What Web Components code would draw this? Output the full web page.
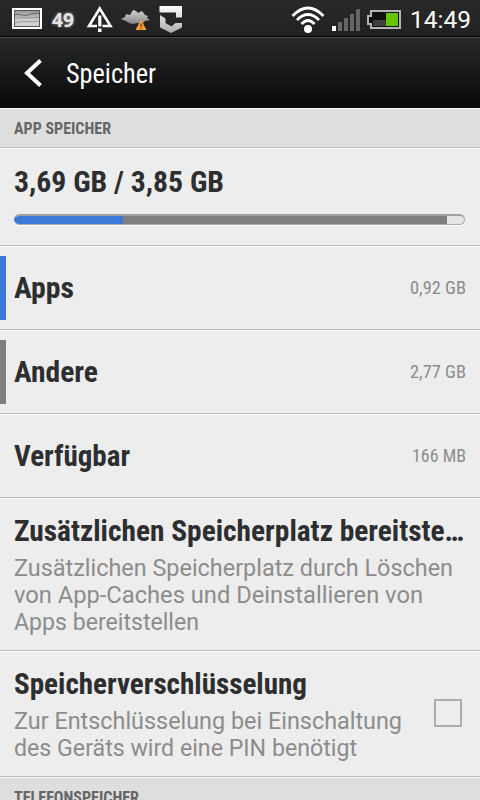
<!doctype html>
<html lang="de">
<head>
  <meta charset="utf-8">
  <title>Speicher</title>

  <style>
    html, body {
      margin: 0;
      width: 480px;
      height: 800px;
      overflow: hidden;
      background: #ededed;
      font-family: "Roboto Condensed", Roboto, sans-serif;
      color: #2d2e2f;
    }
  </style>

  <template id="fit-text-content">
    <style>
      :host { display: block; flex: none; white-space: nowrap; }
      span { display: inline-block; transform-origin: 0 50%; vertical-align: top; }
    </style>
    <span><slot></slot></span>
  </template>

  <template id="status-bar-content">
    <style>
      :host {
        display: flex;
        box-sizing: border-box;
        height: 38px;
        background: linear-gradient(#292929, #202122);
        border-bottom: 1px solid #4a4a4a;
        box-shadow: inset 0 -1px #050505;
        color: #fff;
        font-family: Roboto, sans-serif;
      }
      svg { display: block; flex: none; }
      .badge {
        margin-left: 10px;
        font: bold 20px/39px "Open Sans", sans-serif;
        color: #e4e4e4;
        text-shadow: 0 0 3px #aaa;
      }
      .clock { margin-left: 9px; font-size: 24px; line-height: 40px; }
    </style>
    <svg width="42" height="37" viewBox="0 0 42 37">
      <defs>
        <linearGradient id="photo" x2="0" y2="1"><stop stop-color="#8b8b8b"/><stop offset=".6" stop-color="#d0d0d0"/></linearGradient>
      </defs>
      <rect x="13" y="9" width="28" height="19" fill="url(#photo)" stroke="#fff" stroke-width="2"/>
      <rect x="14.500" y="10.500" width="25" height="16" fill="none" stroke="#555"/>
      <path d="M15 15c6-2 8 2 13 0s7-1 11-2" fill="none" stroke="#666"/>
      <path d="M15 18c7-1 10 1 24-1M15 23c8-3 14 0 24-2" fill="none" stroke="#999"/>
    </svg>
    <fit-text class="badge" width="22">49</fit-text>
    <svg width="115" height="37" viewBox="74 0 115 37">
      <defs>
        <linearGradient id="cloud" x2="0" y2="1"><stop stop-color="#d5d5d5"/><stop offset="1" stop-color="#858585"/></linearGradient>
        <linearGradient id="shield" x2="0" y2="1"><stop stop-color="#fff"/><stop offset="1" stop-color="#aaa"/></linearGradient>
      </defs>
      <path d="M97 26h-8L99.700 8.500 110.500 26h-8" fill="none" stroke="#fff" stroke-width="2.600"/>
      <path d="M98.200 15.500h3.200v11h-3.200zM98 28.500h3.500v3.500h-3.500z" fill="#fff"/>
      <path d="M121 19l4-2 1-3 4 1 3-5 3 1 2 2 4-2 3 4 3 1-1 2 3 2-5 1-3 3-5-1-4 1-4-1-3-2z" fill="url(#cloud)"/>
      <path d="M141 19.500l5.500 10.500h-11z" fill="#f99c32"/>
      <path d="M141 23.500v3.500M141 28v1" stroke="#6b4522" stroke-width="1.400"/>
      <path d="M159.500 6h22.500v11.500h-6v-5h-16.500zM160 15l5.500 3.500v4.500l6 3.500 4-3.500h6.500v4.500l-11 5.500-11-5.500z" fill="url(#shield)"/>
    </svg>
    <svg width="110" height="37" viewBox="291 0 110 37" style="margin-left:102px">
      <g fill="none" stroke="#fff" stroke-width="2.800">
        <path d="M292.500 16q15.500-16 31 0"/>
        <path d="M297 20q11-11 22 0"/>
        <path d="M301.500 24q6.500-7 13 0"/>
      </g>
      <circle cx="308" cy="29" r="4" fill="#fff"/>
      <path d="M332 26h4v5h-4z" fill="#fff"/>
      <path d="M338 22h4v9h-4zM344 18h4v13h-4zM350 14h4v17h-4zM356 9h4v22h-4z" fill="#666"/>
      <path d="M371 11h29v17h-29v-4h-3v-8h3z" fill="#111" stroke="#b5b5b5" stroke-width="2"/>
      <path d="M373 20h13v6h-13z" fill="#404040"/>
      <path d="M386 13h12v13h-12z" fill="#66c400"/>
    </svg>
    <fit-text class="clock" width="61">14:49</fit-text>
  </template>

  <template id="title-bar-content">
    <style>
      :host {
        display: flex;
        align-items: center;
        height: 70px;
        background: linear-gradient(#28292a, #080808);
        color: #fff;
        font-size: 27px;
      }
      svg { display: block; margin: 0 22px; }
      ::slotted(*) { padding-top: 2px; }
    </style>
    <svg width="22" height="30" viewBox="0 0 22 30"><path d="M18.500 2.500L5 15l13.500 12.500" fill="none" stroke="#fff" stroke-width="4"/></svg>
    <slot></slot>
  </template>

  <template id="section-head-content">
    <style>
      :host {
        display: flex;
        box-sizing: border-box;
        height: 40px;
        padding-left: 14px;
        border-top: 1px solid #f5f5f5;
        border-bottom: 1px solid #bcbcbc;
        background: #dedede;
        color: #666;
        font-size: 16px;
        font-weight: bold;
        line-height: 39px;
      }
    </style>
    <slot></slot>
  </template>

  <template id="list-row-content">
    <style>
      :host {
        display: flex;
        align-items: center;
        box-sizing: border-box;
        height: 84px;
        border-top: 1px solid #fff;
        border-bottom: 1px solid #bbb;
      }
      .chip { width: 6px; height: 64px; margin-right: 8px; background: var(--chip, transparent); }
      .main { flex: 1; font-size: 30px; font-weight: bold; line-height: 36px; }
      .end { padding: 0 14px 2px 0; color: #8c8c8c; font-size: 18px; }
      ::slotted([slot=note]) {
        position: relative;
        font: 23px/27px Roboto, sans-serif;
        color: #8c8c8c;
      }
      .notes { display: block; }
      :host(.noted) .notes { padding-top: 6px; }
    </style>
    <div class="chip"></div>
    <div class="main"><slot></slot><div class="notes"><slot name="note"></slot></div></div>
    <div class="end"><slot name="end"></slot></div>
  </template>

  <template id="usage-bar-content">
    <style>
      :host {
        display: flex;
        box-sizing: border-box;
        width: 451px;
        height: 11px;
        margin-top: 14px;
        border: 1px solid #aaa;
        border-top: 2px solid #a0a0a0;
        border-left: 0;
        border-radius: 6px;
        overflow: hidden;
        background: #e6e6e6;
        box-shadow: 0 1px #fff;
      }
      .apps { width: 109px; background: #3c79d8; }
      .other { width: 324px; background: #7f7f7d; }
    </style>
    <div class="apps"></div><div class="other"></div>
  </template>

  <template id="check-box-content">
    <style>
      :host {
        display: block;
        box-sizing: border-box;
        width: 28px;
        height: 28px;
        margin-right: 4px;
        border: 2px solid #adadad;
      }
    </style>
  </template>

  <script>

    function define(name, ready) {
      customElements.define(name, class extends HTMLElement {
        connectedCallback() {
          const root = this.attachShadow({mode: 'open'});
          const template = document.getElementById(name + '-content');
          root.appendChild(document.importNode(template.content, true));
          if (ready) {
            ready(this);
          }
        }
      });
    }

    // One line of text, squeezed or stretched to the given width.
    function fitText(el) {
      const span = el.shadowRoot.querySelector('span');
      const width = Number(el.getAttribute('width'));
      el.style.width = width + 'px';
      requestAnimationFrame(() => {
        const natural = span.getBoundingClientRect().width;
        span.style.transform = `scaleX(${width / natural})`;
      });
    }

    window.addEventListener('DOMContentLoaded', () => {
      define('status-bar');
      define('title-bar');
      define('section-head');
      define('list-row');
      define('usage-bar');
      define('check-box');
      define('fit-text', fitText);
    });

  </script>

</head>
<body>
  <status-bar></status-bar>
  <title-bar><fit-text width="90">Speicher</fit-text></title-bar>
  <section-head><fit-text width="97">APP SPEICHER</fit-text></section-head>
  <list-row style="height:98px;padding-bottom:6px">
    <fit-text width="210">3,69 GB / 3,85 GB</fit-text>
    <usage-bar></usage-bar>
  </list-row>
  <list-row style="--chip:#3c79d8">
    <fit-text width="60">Apps</fit-text>
    <fit-text slot="end" width="56">0,92 GB</fit-text>
  </list-row>
  <list-row style="--chip:#7f7f7d">
    <fit-text width="84">Andere</fit-text>
    <fit-text slot="end" width="56">2,77 GB</fit-text>
  </list-row>
  <list-row>
    <fit-text width="116">Verfügbar</fit-text>
    <fit-text slot="end" width="54">166 MB</fit-text>
  </list-row>
  <list-row class="noted" style="height:153px">
    <fit-text width="450">Zusätzlichen Speicherplatz bereitste…</fit-text>
    <fit-text slot="note" width="439">Zusätzlichen Speicherplatz durch Löschen</fit-text>
    <fit-text slot="note" width="409">von App-Caches und Deinstallieren von</fit-text>
    <fit-text slot="note" width="185">Apps bereitstellen</fit-text>
  </list-row>
  <list-row class="noted" style="height:126px">
    <fit-text width="293">Speicherverschlüsselung</fit-text>
    <fit-text slot="note" width="388">Zur Entschlüsselung bei Einschaltung</fit-text>
    <fit-text slot="note" width="343">des Geräts wird eine PIN benötigt</fit-text>
    <check-box slot="end"></check-box>
  </list-row>
  <section-head style="height:23px;border-bottom:0"><fit-text width="125">TELEFONSPEICHER</fit-text></section-head>
</body>
</html>
